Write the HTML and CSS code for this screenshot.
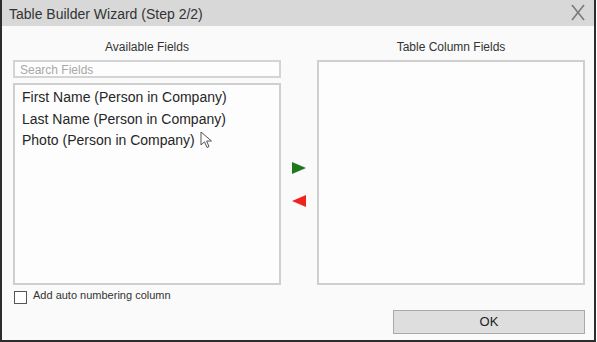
FILE: index.html
```html
<!DOCTYPE html>
<html>
<head>
<meta charset="utf-8">
<title>Table Builder Wizard</title>
<link rel="stylesheet" href="styles.css">
</head>
<body>
<div class="window">
	<div class="titlebar">
		<span class="title">Table Builder Wizard (Step 2/2)</span>
		<svg class="close" width="14" height="17" viewBox="0 0 14 17">
			<line x1="1" y1="1" x2="13" y2="16" stroke="#7a7a7a" stroke-width="1.6"/>
			<line x1="13" y1="1" x2="1" y2="16" stroke="#7a7a7a" stroke-width="1.6"/>
		</svg>
	</div>
	<div class="content">
		<div class="panes">
			<div class="pane">
				<div class="pane-label">Available Fields</div>
				<div class="search">Search Fields</div>
				<div class="list list-left">
					<div class="item">First Name (Person in Company)</div>
					<div class="item">Last Name (Person in Company)</div>
					<div class="item">Photo (Person in Company)</div>
					<svg class="cursor" width="14" height="18" viewBox="0 0 14 18">
						<path d="M1 1 L1 14 L4.5 10.8 L7 16.5 L9 15.6 L6.6 10 L11.5 10 Z" fill="#ffffff" stroke="#555555" stroke-width="1" stroke-linejoin="round"/>
					</svg>
				</div>
			</div>
			<div class="movers">
				<svg class="arrow" width="14" height="12" viewBox="0 0 14 12"><polygon points="0,0 14,6 0,12" fill="#1c7a1c"/></svg>
				<svg class="arrow" width="14" height="12" viewBox="0 0 14 12"><polygon points="14,0 0,6 14,12" fill="#f0231e"/></svg>
			</div>
			<div class="pane">
				<div class="pane-label">Table Column Fields</div>
				<div class="list list-right"></div>
			</div>
		</div>
		<label class="check-row"><span class="checkbox"></span>Add auto numbering column</label>
		<div class="buttons">
			<div class="ok-btn">OK</div>
		</div>
	</div>
</div>
</body>
</html>
```

FILE: styles.css
```css
body{
	margin: 0;
	background-color: #ffffff;
	font-family: "Liberation Sans", Arial, sans-serif;
	color: #2a2a2a;
}

.window{
	width: 596px;
	height: 342px;
	box-sizing: border-box;
	border: 2px solid #2d2d2d;
	border-top: none;
	background-color: #fafafa;
	display: flex;
	flex-direction: column;
}

.titlebar{
	height: 26px;
	background-color: #d8d8d8;
	display: flex;
	align-items: center;
	justify-content: space-between;
	padding: 0 9px 0 7px;
	flex-shrink: 0;
}
.title{
	font-size: 14px;
	color: #333333;
	padding-top: 1px;
}
.close{
	margin-top: -2px;
}

.content{
	padding: 14px 9px 0 11px;
	display: flex;
	flex-direction: column;
}

.panes{
	display: flex;
}
.pane{
	width: 268px;
	display: flex;
	flex-direction: column;
}
.pane-label{
	height: 20px;
	font-size: 12px;
	text-align: center;
	color: #333333;
}
.search{
	height: 18px;
	box-sizing: border-box;
	border: 2px solid #d4d4d4;
	font-size: 12px;
	color: #a8a8a8;
	padding: 1px 0 0 5px;
	background-color: #fdfdfd;
}
.list{
	box-sizing: border-box;
	border: 2px solid #cfcfcf;
	background-color: #fdfdfd;
}
.list-left{
	position: relative;
	margin-top: 5px;
	height: 202px;
	padding: 2px 0 0 7px;
}
.list-right{
	height: 225px;
}
.item{
	font-size: 14px;
	height: 21.5px;
	line-height: 21px;
	color: #262626;
}
/* mouse pointer caught in the screenshot */
.cursor{
	position: absolute;
	left: 185px;
	top: 46px;
}

.movers{
	width: 36px;
	padding-top: 43px;
	height: 202px;
	display: flex;
	flex-direction: column;
	align-items: center;
	justify-content: center;
	gap: 21px;
}

.check-row{
	display: flex;
	align-items: flex-start;
	margin-top: 4px;
	padding-left: 1px;
	font-size: 11px;
	color: #333333;
}
.checkbox{
	width: 13px;
	height: 13px;
	box-sizing: border-box;
	border: 1px solid #555555;
	background-color: #ffffff;
	margin: 2px 6px 0 0;
}

.buttons{
	display: flex;
	justify-content: flex-end;
	margin-top: 6px;
}
.ok-btn{
	width: 192px;
	height: 24px;
	box-sizing: border-box;
	border: 1px solid #a9a9a9;
	background-color: #dedede;
	font-size: 13px;
	text-align: center;
	line-height: 22px;
	color: #222222;
}
```
